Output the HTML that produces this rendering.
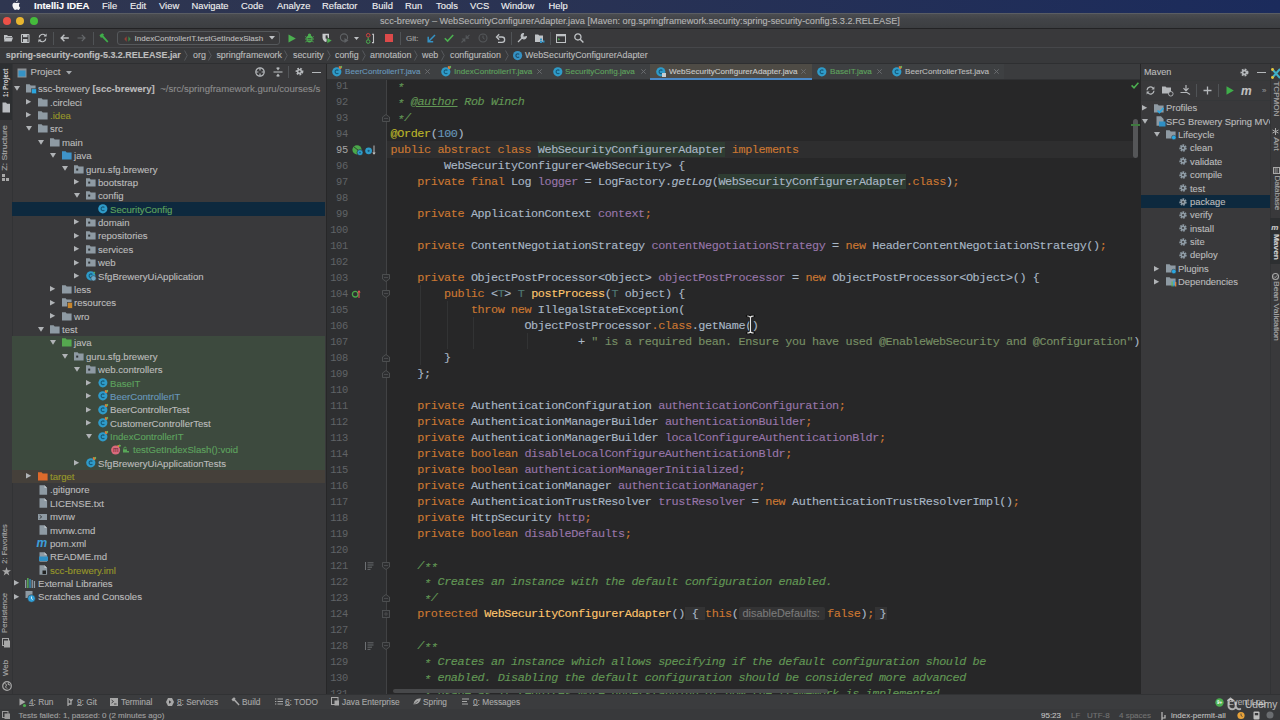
<!DOCTYPE html><html><head><meta charset="utf-8"><style>
*{margin:0;padding:0;box-sizing:border-box}
html,body{width:1280px;height:720px;overflow:hidden;background:#39393b;font-family:"Liberation Sans",sans-serif;}
.abs{position:absolute}
.t{position:absolute;white-space:pre;line-height:1;-webkit-text-stroke:0.12px}
.code{position:absolute;white-space:pre;font-family:"Liberation Mono",monospace;font-size:11.8px;letter-spacing:-0.39px;line-height:16px;height:16px;color:#a9b7c6;-webkit-text-stroke:0.12px;padding-top:0.5px}
.k{color:#cc7832}.f{color:#9876aa}.c{color:#629755;font-style:italic}.s{color:#778f65}.n{color:#6897bb}
.an{color:#bbb529}.m{color:#ffc66d}.tp{color:#507874}.it{font-style:italic}
.hl{background:#2e3c32;padding:0.5px 0}
.ln{position:absolute;font-family:"Liberation Mono",monospace;font-size:10.4px;letter-spacing:-0.35px;line-height:16px;padding-top:0.5px;color:#606366;text-align:right}
svg{position:absolute;overflow:visible}
</style></head><body>
<div class="abs" style="left:0px;top:0px;width:1280px;height:13px;background:linear-gradient(90deg,#2f3650 0%,#2a3353 40%,#1b2b5c 100%);"></div>
<div class="abs" style="left:0px;top:13px;width:1280px;height:1px;background:#5a5d63;"></div>
<svg style="left:11.3px;top:0.3px" width="10" height="11" viewBox="0 0 9 10"><path d="M6.1 0.3c0.1 0.8-0.5 1.7-1.4 1.8-0.1-0.8 0.5-1.7 1.4-1.8zM8.3 7.1c-0.4 0.9-0.9 1.9-1.6 1.9-0.6 0-0.8-0.4-1.5-0.4-0.7 0-0.9 0.4-1.5 0.4-0.7 0-1.4-1.1-1.8-1.9C1 5.3 1 3.5 2.2 2.8c0.4-0.3 0.9-0.4 1.4-0.4 0.5 0 0.9 0.4 1.4 0.4 0.5 0 0.8-0.4 1.5-0.4 0.6 0 1.1 0.3 1.5 0.8-1.2 0.7-1.1 2.8 0.3 3.9z" fill="#f4f4f4"/></svg>
<div class="t" style="left:34.00px;top:1.16px;font-size:9.500px;color:#ffffff;font-weight:bold;font-family:'Liberation Sans';">IntelliJ IDEA</div>
<div class="t" style="left:102.00px;top:1.24px;font-size:9.400px;color:#f0f0f0;font-weight:normal;font-family:'Liberation Sans';">File</div>
<div class="t" style="left:130.00px;top:1.24px;font-size:9.400px;color:#f0f0f0;font-weight:normal;font-family:'Liberation Sans';">Edit</div>
<div class="t" style="left:159.00px;top:1.24px;font-size:9.400px;color:#f0f0f0;font-weight:normal;font-family:'Liberation Sans';">View</div>
<div class="t" style="left:191.50px;top:1.24px;font-size:9.400px;color:#f0f0f0;font-weight:normal;font-family:'Liberation Sans';">Navigate</div>
<div class="t" style="left:241.00px;top:1.24px;font-size:9.400px;color:#f0f0f0;font-weight:normal;font-family:'Liberation Sans';">Code</div>
<div class="t" style="left:277.00px;top:1.24px;font-size:9.400px;color:#f0f0f0;font-weight:normal;font-family:'Liberation Sans';">Analyze</div>
<div class="t" style="left:322.00px;top:1.24px;font-size:9.400px;color:#f0f0f0;font-weight:normal;font-family:'Liberation Sans';">Refactor</div>
<div class="t" style="left:372.00px;top:1.24px;font-size:9.400px;color:#f0f0f0;font-weight:normal;font-family:'Liberation Sans';">Build</div>
<div class="t" style="left:405.00px;top:1.24px;font-size:9.400px;color:#f0f0f0;font-weight:normal;font-family:'Liberation Sans';">Run</div>
<div class="t" style="left:436.00px;top:1.24px;font-size:9.400px;color:#f0f0f0;font-weight:normal;font-family:'Liberation Sans';">Tools</div>
<div class="t" style="left:470.00px;top:1.24px;font-size:9.400px;color:#f0f0f0;font-weight:normal;font-family:'Liberation Sans';">VCS</div>
<div class="t" style="left:501.00px;top:1.24px;font-size:9.400px;color:#f0f0f0;font-weight:normal;font-family:'Liberation Sans';">Window</div>
<div class="t" style="left:548.50px;top:1.24px;font-size:9.400px;color:#f0f0f0;font-weight:normal;font-family:'Liberation Sans';">Help</div>
<div class="abs" style="left:0px;top:14px;width:1280px;height:14px;background:linear-gradient(180deg,#4a4c50 0%,#414347 40%,#3c3e41 100%);"></div>
<div class="abs" style="left:0px;top:27.5px;width:1280px;height:1.5px;background:#232325;"></div>
<div class="abs" style="left:3px;top:17px;width:8px;height:8px;border-radius:50%;background:#ec5147"></div>
<div class="abs" style="left:16.4px;top:17px;width:8px;height:8px;border-radius:50%;background:#e8b630"></div>
<div class="abs" style="left:29.700000000000003px;top:17px;width:8px;height:8px;border-radius:50%;background:#45bb3c"></div>
<div class="t" style="left:380.00px;top:17.23px;font-size:9.175px;color:#b4b4b4;font-weight:normal;font-family:'Liberation Sans';">scc-brewery – WebSecurityConfigurerAdapter.java [Maven: org.springframework.security:spring-security-config:5.3.2.RELEASE]</div>
<div class="abs" style="left:0px;top:29px;width:1280px;height:18px;background:#39393b;"></div>
<div class="abs" style="left:0px;top:47px;width:1280px;height:1px;background:#46474a;"></div>
<svg style="left:4px;top:34px" width="9" height="8" viewBox="0 0 9 8"><path d="M0 1h3l1 1h4v1H2L0 7z" fill="#bfc2c5"/><path d="M1.6 3.5H9L7.6 7.5H0z" fill="#bfc2c5"/></svg>
<svg style="left:21px;top:33.5px" width="8" height="9" viewBox="0 0 8 9"><rect x="0.5" y="0.5" width="7.5" height="8" rx="0.5" fill="none" stroke="#bfc2c5" stroke-width="1.1"/><rect x="2" y="1" width="4.5" height="2.2" fill="#bfc2c5"/><rect x="2" y="5" width="4.5" height="3" fill="#bfc2c5"/></svg>
<svg style="left:38px;top:33px" width="9" height="10" viewBox="0 0 9 10"><path d="M1.2 4.5a3.4 3.4 0 0 1 6-2" fill="none" stroke="#bfc2c5" stroke-width="1.2"/><path d="M7.8 5.5a3.4 3.4 0 0 1-6 2" fill="none" stroke="#bfc2c5" stroke-width="1.2"/><path d="M8.6 0.6v3H5.6z" fill="#bfc2c5"/><path d="M0.4 9.4v-3h3z" fill="#bfc2c5"/></svg>
<div class="abs" style="left:53px;top:32px;width:1px;height:13px;background:#505356;"></div>
<svg style="left:60px;top:34px" width="9" height="8" viewBox="0 0 9 8"><path d="M8.8 4H1.5M4.4 0.8L1.2 4l3.2 3.2" fill="none" stroke="#bfc2c5" stroke-width="1.4"/></svg>
<svg style="left:77px;top:34px" width="9" height="8" viewBox="0 0 9 8"><path d="M0.5 4h7.3M4.8 0.8L8 4 4.8 7.2" fill="none" stroke="#65686b" stroke-width="1.2"/></svg>
<div class="abs" style="left:93px;top:32px;width:1px;height:13px;background:#505356;"></div>
<svg style="left:99px;top:32.5px" width="10" height="11" viewBox="0 0 10 11"><path d="M0.5 2.2L3.2 0.2 5 1.6 4.3 2.4 9.4 8.4 8.2 9.6 3 4.2 2 5z" fill="#3fae4a"/></svg>
<div class="abs" style="left:117px;top:31px;width:163px;height:14px;background:#39393b;border:1px solid #55585b;border-radius:3px"></div>
<svg style="left:123.5px;top:35.5px" width="7" height="6" viewBox="0 0 7 6"><path d="M2.6 0.3L0.3 3 2.6 5.7z" fill="#9a4036"/><path d="M4.4 0.3L6.7 3 4.4 5.7z" fill="#3f8a45"/></svg>
<div class="t" style="left:134.50px;top:34.68px;font-size:8.058px;color:#bcbcbc;font-weight:normal;font-family:'Liberation Sans';">IndexControllerIT.testGetIndexSlash</div>
<svg style="left:269px;top:36px" width="6" height="4" viewBox="0 0 6 4"><path d="M0 0h6L3 3.6z" fill="#bfc2c5"/></svg>
<svg style="left:288px;top:33.5px" width="8" height="9" viewBox="0 0 8 9"><path d="M0.5 0.5L7.8 4.5 0.5 8.5z" fill="#4caf50"/></svg>
<svg style="left:305px;top:33px" width="9" height="10" viewBox="0 0 9 10"><ellipse cx="4.5" cy="5.8" rx="3.1" ry="3.6" fill="#4caf50"/><circle cx="4.5" cy="2" r="1.6" fill="#4caf50"/><path d="M0.3 3.5l1.5 1M8.7 3.5l-1.5 1M0 6h1.5M9 6H7.5M0.4 9l1.5-1M8.6 9l-1.5-1" stroke="#4caf50" stroke-width="0.9"/><path d="M2.6 5.5h3.8M2.6 7.2h3.8" stroke="#39393b" stroke-width="0.7"/></svg>
<svg style="left:322px;top:33px" width="11" height="11" viewBox="0 0 11 11"><path d="M0.5 0.8h6.5v3.7c0 2.4-1.7 3.9-3.25 4.6C2.2 8.4 0.5 6.9 0.5 4.5z" fill="#c9cbcd"/><path d="M3.6 2.3h2v3.3H3.6z" fill="#39393b"/><path d="M5 4.5l5.2 3.1L5 10.7z" fill="#4caf50" stroke="#39393b" stroke-width="0.7"/></svg>
<svg style="left:340px;top:33px" width="9" height="10" viewBox="0 0 9 10"><circle cx="4" cy="4.5" r="3.6" fill="none" stroke="#5f6265" stroke-width="1.1"/><path d="M4.5 5l4 2.5-4 2.5z" fill="#5f6265"/></svg>
<svg style="left:354px;top:36.5px" width="5" height="3" viewBox="0 0 5 3"><path d="M0 0h5L2.5 3z" fill="#bfc2c5"/></svg>
<svg style="left:366px;top:32.5px" width="9" height="11" viewBox="0 0 9 11"><circle cx="2.2" cy="2.3" r="1.8" fill="none" stroke="#d2433e" stroke-width="1"/><circle cx="2.2" cy="8.6" r="1.8" fill="none" stroke="#4caf50" stroke-width="1"/><path d="M2.2 4.3v2.4" stroke="#4caf50" stroke-width="1"/><path d="M6 1.2h1.5v8.4H6" fill="none" stroke="#c2c4c6" stroke-width="1.1"/></svg>
<div class="abs" style="left:385px;top:34px;width:8px;height:8px;background:#dc4a4a;"></div>
<div class="abs" style="left:400px;top:32px;width:1px;height:13px;background:#505356;"></div>
<div class="t" style="left:406.00px;top:34.70px;font-size:8.035px;color:#a6a6a6;font-weight:normal;font-family:'Liberation Sans';">Git:</div>
<svg style="left:427px;top:33.5px" width="9" height="9" viewBox="0 0 9 9"><path d="M8 1L1.8 7.2M1.2 2.8v5h5" fill="none" stroke="#3592c4" stroke-width="1.5"/></svg>
<svg style="left:444px;top:34px" width="10" height="8" viewBox="0 0 10 8"><path d="M0.8 4.2L3.6 7 9.2 1" fill="none" stroke="#4caf50" stroke-width="1.6"/></svg>
<svg style="left:461px;top:33.5px" width="9" height="9" viewBox="0 0 9 9"><path d="M8.5 0.8L5.5 3.8M5.2 1.2v2.9h2.9M0.5 8.5l3-3M3.8 7.8V5h-2.9" fill="none" stroke="#55585b" stroke-width="1.1"/></svg>
<svg style="left:478px;top:33px" width="10" height="10" viewBox="0 0 10 10"><circle cx="5" cy="5" r="4" fill="none" stroke="#55585b" stroke-width="1.1"/><path d="M5 2.6V5l1.6 1" fill="none" stroke="#55585b" stroke-width="1"/></svg>
<svg style="left:496px;top:33.5px" width="9" height="9" viewBox="0 0 9 9"><path d="M2.5 3h3.5a2.6 2.6 0 0 1 0 5.3H2" fill="none" stroke="#bfc2c5" stroke-width="1.3"/><path d="M3.2 0.3L0.5 3 3.2 5.7" fill="none" stroke="#bfc2c5" stroke-width="1.3"/></svg>
<div class="abs" style="left:511px;top:32px;width:1px;height:13px;background:#505356;"></div>
<svg style="left:517px;top:33px" width="10" height="10" viewBox="0 0 10 10"><path d="M1 9L5 5M6.5 0.6a2.6 2.6 0 1 0 2.9 2.9L7.8 4.2 5.8 4.2 5.8 2.2 6.5 0.6z" fill="#bfc2c5" stroke="#bfc2c5" stroke-width="1.2" stroke-linejoin="round"/></svg>
<svg style="left:535px;top:33.5px" width="10" height="9" viewBox="0 0 10 9"><path d="M0 0.5h3.2l1 1H8v6.5H0z" fill="#bfc2c5"/><rect x="5" y="4.5" width="2" height="2" fill="#3592c4"/><rect x="7.5" y="6.5" width="2" height="2" fill="#3592c4"/><rect x="5" y="7" width="2" height="2" fill="#3592c4"/></svg>
<div class="abs" style="left:550px;top:32px;width:1px;height:13px;background:#505356;"></div>
<svg style="left:556px;top:33.5px" width="10" height="9" viewBox="0 0 10 9"><rect x="0.5" y="0.5" width="9" height="8" fill="none" stroke="#bfc2c5" stroke-width="1"/><rect x="0.5" y="0.5" width="9" height="1.8" fill="#bfc2c5"/><path d="M2.2 4l2 1.3-2 1.3z" fill="#4caf50"/></svg>
<svg style="left:574px;top:33px" width="10" height="10" viewBox="0 0 10 10"><circle cx="3.9" cy="3.9" r="3.1" fill="none" stroke="#bfc2c5" stroke-width="1.3"/><path d="M6.2 6.2l3.2 3.2" stroke="#bfc2c5" stroke-width="1.4"/></svg>
<div class="abs" style="left:0px;top:48px;width:1280px;height:15px;background:#38393b;"></div>
<div class="abs" style="left:0px;top:63px;width:1280px;height:1px;background:#2e2f31;"></div>
<div class="t" style="left:5.80px;top:50.94px;font-size:8.932px;color:#bdbdbd;font-weight:bold;font-family:'Liberation Sans';">spring-security-config-5.3.2.RELEASE.jar</div>
<div class="t" style="left:193.00px;top:50.97px;font-size:8.900px;color:#bbbbbb;font-weight:normal;font-family:'Liberation Sans';">org</div>
<div class="t" style="left:216.40px;top:50.97px;font-size:8.900px;color:#bbbbbb;font-weight:normal;font-family:'Liberation Sans';">springframework</div>
<div class="t" style="left:293.00px;top:50.97px;font-size:8.900px;color:#bbbbbb;font-weight:normal;font-family:'Liberation Sans';">security</div>
<div class="t" style="left:335.00px;top:50.97px;font-size:8.900px;color:#bbbbbb;font-weight:normal;font-family:'Liberation Sans';">config</div>
<div class="t" style="left:370.00px;top:50.97px;font-size:8.900px;color:#bbbbbb;font-weight:normal;font-family:'Liberation Sans';">annotation</div>
<div class="t" style="left:422.00px;top:50.97px;font-size:8.900px;color:#bbbbbb;font-weight:normal;font-family:'Liberation Sans';">web</div>
<div class="t" style="left:450.00px;top:50.97px;font-size:8.900px;color:#bbbbbb;font-weight:normal;font-family:'Liberation Sans';">configuration</div>
<div class="t" style="left:525.00px;top:50.97px;font-size:8.900px;color:#bbbbbb;font-weight:normal;font-family:'Liberation Sans';">WebSecurityConfigurerAdapter</div>
<svg style="left:184px;top:50px" width="4" height="11" viewBox="0 0 4 11"><path d="M0.5 0.5L3.2 5.5 0.5 10.5" fill="none" stroke="#5d6064" stroke-width="0.8"/></svg>
<svg style="left:207.5px;top:50px" width="4" height="11" viewBox="0 0 4 11"><path d="M0.5 0.5L3.2 5.5 0.5 10.5" fill="none" stroke="#5d6064" stroke-width="0.8"/></svg>
<svg style="left:284px;top:50px" width="4" height="11" viewBox="0 0 4 11"><path d="M0.5 0.5L3.2 5.5 0.5 10.5" fill="none" stroke="#5d6064" stroke-width="0.8"/></svg>
<svg style="left:326.5px;top:50px" width="4" height="11" viewBox="0 0 4 11"><path d="M0.5 0.5L3.2 5.5 0.5 10.5" fill="none" stroke="#5d6064" stroke-width="0.8"/></svg>
<svg style="left:362px;top:50px" width="4" height="11" viewBox="0 0 4 11"><path d="M0.5 0.5L3.2 5.5 0.5 10.5" fill="none" stroke="#5d6064" stroke-width="0.8"/></svg>
<svg style="left:414px;top:50px" width="4" height="11" viewBox="0 0 4 11"><path d="M0.5 0.5L3.2 5.5 0.5 10.5" fill="none" stroke="#5d6064" stroke-width="0.8"/></svg>
<svg style="left:441px;top:50px" width="4" height="11" viewBox="0 0 4 11"><path d="M0.5 0.5L3.2 5.5 0.5 10.5" fill="none" stroke="#5d6064" stroke-width="0.8"/></svg>
<svg style="left:504.5px;top:50px" width="4" height="11" viewBox="0 0 4 11"><path d="M0.5 0.5L3.2 5.5 0.5 10.5" fill="none" stroke="#5d6064" stroke-width="0.8"/></svg>
<svg style="left:512.5px;top:51px" width="9.2" height="9.2" viewBox="0 0 9.2 9.2"><circle cx="4.6" cy="4.6" r="4.6" fill="#3592c4"/><path d="M6.199999999999999 3.3a1.9 1.9 0 1 0 0 2.6" fill="none" stroke="#1d4f6e" stroke-width="1.1"/></svg>
<!--END-->
<div class="abs" style="left:0px;top:64px;width:12px;height:630px;background:#39393b;"></div>
<div class="abs" style="left:12px;top:64px;width:1px;height:630px;background:#323335;"></div>
<div class="abs" style="left:0px;top:64px;width:12px;height:56px;background:#2d2f31;"></div>
<div class="t" style="left:-16.57px;top:78.86px;width:45.55px;height:7.8px;font-size:7.800px;color:#d0d0d0;font-weight:bold;text-align:center;transform:rotate(-90deg) scaleX(0.796)">1: Project</div>
<svg style="left:2px;top:101.5px" width="8.5" height="10.5" viewBox="0 0 8.5 10.5"><path d="M0.5 0.5h3.5l1 1.2h3v8.8H0.5z" fill="#b8bcc0"/></svg>
<div class="t" style="left:-19.87px;top:143.56px;width:50.74px;height:7.8px;font-size:7.800px;color:#a8a8a8;font-weight:normal;text-align:center;transform:rotate(-90deg) scaleX(1.122)">Z: Structure</div>
<svg style="left:2px;top:173.5px" width="8" height="7.5" viewBox="0 0 8 7.5"><rect x="0" y="4" width="3" height="3" fill="#a8a8a8"/><rect x="4" y="4" width="3" height="3" fill="#a8a8a8"/><rect x="0" y="0" width="3" height="3" fill="#a8a8a8"/></svg>
<div class="t" style="left:-19.87px;top:539.96px;width:50.75px;height:7.8px;font-size:7.800px;color:#a8a8a8;font-weight:normal;text-align:center;transform:rotate(-90deg) scaleX(0.969)">2: Favorites</div>
<svg style="left:1.5px;top:566.5px" width="9" height="9" viewBox="0 0 9 9"><path d="M4.5 0l1.1 3.2H9L6.3 5.2l1 3.3-2.8-2-2.8 2 1-3.3L0 3.2h3.4z" fill="#a8a8a8"/></svg>
<div class="t" style="left:-19.88px;top:608.71px;width:50.75px;height:7.8px;font-size:7.800px;color:#a8a8a8;font-weight:normal;text-align:center;transform:rotate(-90deg) scaleX(0.982)">Persistence</div>
<svg style="left:2px;top:637.5px" width="8" height="10" viewBox="0 0 8 10"><rect x="0.5" y="0.5" width="6" height="7" fill="none" stroke="#a8a8a8" stroke-width="1"/><rect x="2" y="2.5" width="6" height="7" fill="#a8a8a8"/></svg>
<div class="t" style="left:-7.45px;top:663.71px;width:25.90px;height:7.8px;font-size:7.800px;color:#a8a8a8;font-weight:normal;text-align:center;transform:rotate(-90deg) scaleX(1.006)">Web</div>
<svg style="left:1.5px;top:680.5px" width="10" height="10" viewBox="0 0 10 10"><circle cx="5" cy="5" r="4.3" fill="none" stroke="#a8a8a8" stroke-width="1.2"/><path d="M2.5 2.2l2.2 1.6-1.2 2.2 1.6 1.6M6.5 1.3l-.5 1.9 2.2 1" fill="none" stroke="#a8a8a8" stroke-width="1"/></svg>
<div class="abs" style="left:13px;top:64px;width:313px;height:630px;background:#39393b;"></div>
<svg style="left:17px;top:67.5px" width="10" height="10" viewBox="0 0 10 10"><rect x="0.5" y="0.5" width="9" height="9" fill="#8e9398"/><rect x="1.5" y="2.5" width="7" height="6" fill="#3592c4"/></svg>
<div class="t" style="left:30.50px;top:67.37px;font-size:9.600px;color:#bbbbbb;font-weight:normal;font-family:'Liberation Sans';">Project</div>
<svg style="left:66px;top:71px" width="6" height="4" viewBox="0 0 6 4"><path d="M0 0h6L3 3.5z" fill="#a5a9ad"/></svg>
<svg style="left:255px;top:67px" width="10" height="10" viewBox="0 0 10 10"><circle cx="5" cy="5" r="4.2" fill="none" stroke="#b5b8bb" stroke-width="1.2"/><path d="M5 0.8v2.6M5 6.6v2.6M0.8 5h2.6M6.6 5h2.6" stroke="#b5b8bb" stroke-width="1.2"/></svg>
<svg style="left:273px;top:67px" width="10" height="10" viewBox="0 0 10 10"><path d="M0.5 5h9" stroke="#b5b8bb" stroke-width="1.1"/><path d="M3 0.8h4L5 3.4z M3 9.2h4L5 6.6z" fill="#b5b8bb"/><path d="M5 0v1M5 9v1" stroke="#b5b8bb" stroke-width="1"/></svg>
<div class="abs" style="left:288px;top:66px;width:1px;height:12px;background:#505356;"></div>
<svg style="left:295px;top:67px" width="9" height="9" viewBox="0 0 9 9"><circle cx="4.5" cy="4.5" r="2.8" fill="none" stroke="#b5b8bb" stroke-width="2.2" stroke-dasharray="1.6 1.1"/><circle cx="4.5" cy="4.5" r="2.6" fill="#b5b8bb"/><circle cx="4.5" cy="4.5" r="1.1" fill="#39393b"/></svg>
<div class="abs" style="left:312px;top:71.5px;width:9px;height:1.2px;background:#b5b8bb;"></div>
<div class="abs" style="left:12px;top:202.13px;width:313px;height:13.4px;background:#0d293e;"></div>
<div class="abs" style="left:12px;top:335.83px;width:313px;height:133.7px;background:#3d4a3e;"></div>
<div class="abs" style="left:12px;top:469.53px;width:313px;height:13.4px;background:#45403a;"></div>
<svg style="left:13.8px;top:86.2px" width="6" height="5" viewBox="0 0 6 5"><path d="M0 0H6L3 4.8z" fill="#b0b3b6"/></svg>
<svg style="left:25.5px;top:84.3px" width="10" height="8.5" viewBox="0 0 10 8.5"><path d="M0 0.3h3.6l1.1 1.3H9.6v6.8H0z" fill="#8e9aa3"/><rect x="5.5" y="4.8" width="5" height="5" fill="#2aa6e0" stroke="#39393b" stroke-width="0.6"/></svg>
<div class="t" style="left:38.00px;top:84.37px;font-size:9.600px;color:#bbbbbb;font-weight:normal;font-family:'Liberation Sans';">ssc-brewery </div>
<div class="t" style="left:92.41px;top:84.37px;font-size:9.600px;color:#bbbbbb;font-weight:bold;font-family:'Liberation Sans';">[scc-brewery]</div>
<div class="t" style="left:154.84px;top:84.37px;font-size:9.600px;color:#8b8b8b;font-weight:normal;font-family:'Liberation Sans';">  ~/src/springframework.guru/courses/s</div>
<svg style="left:26.1px;top:99.07000000000001px" width="6" height="6" viewBox="0 0 6 6"><path d="M0 0L5.2 2.8 0 5.6z" fill="#b0b3b6"/></svg>
<svg style="left:37.5px;top:97.67px" width="10" height="8.5" viewBox="0 0 10 8.5"><path d="M0 0.3h3.6l1.1 1.3H9.6v6.8H0z" fill="#8e9aa3"/></svg>
<div class="t" style="left:50.00px;top:97.74px;font-size:9.600px;color:#bbbbbb;font-weight:normal;font-family:'Liberation Sans';">.circleci</div>
<svg style="left:26.1px;top:112.44px" width="6" height="6" viewBox="0 0 6 6"><path d="M0 0L5.2 2.8 0 5.6z" fill="#b0b3b6"/></svg>
<svg style="left:37.5px;top:111.03999999999999px" width="10" height="8.5" viewBox="0 0 10 8.5"><path d="M0 0.3h3.6l1.1 1.3H9.6v6.8H0z" fill="#8e9aa3"/></svg>
<div class="t" style="left:50.00px;top:111.11px;font-size:9.600px;color:#98982a;font-weight:normal;font-family:'Liberation Sans';">.idea</div>
<svg style="left:25.8px;top:126.31000000000002px" width="6" height="5" viewBox="0 0 6 5"><path d="M0 0H6L3 4.8z" fill="#b0b3b6"/></svg>
<svg style="left:37.5px;top:124.41000000000001px" width="10" height="8.5" viewBox="0 0 10 8.5"><path d="M0 0.3h3.6l1.1 1.3H9.6v6.8H0z" fill="#8e9aa3"/></svg>
<div class="t" style="left:50.00px;top:124.48px;font-size:9.600px;color:#bbbbbb;font-weight:normal;font-family:'Liberation Sans';">src</div>
<svg style="left:37.8px;top:139.67999999999998px" width="6" height="5" viewBox="0 0 6 5"><path d="M0 0H6L3 4.8z" fill="#b0b3b6"/></svg>
<svg style="left:49.5px;top:137.78px" width="10" height="8.5" viewBox="0 0 10 8.5"><path d="M0 0.3h3.6l1.1 1.3H9.6v6.8H0z" fill="#8e9aa3"/></svg>
<div class="t" style="left:62.00px;top:137.85px;font-size:9.600px;color:#bbbbbb;font-weight:normal;font-family:'Liberation Sans';">main</div>
<svg style="left:49.8px;top:153.04999999999998px" width="6" height="5" viewBox="0 0 6 5"><path d="M0 0H6L3 4.8z" fill="#b0b3b6"/></svg>
<svg style="left:61.5px;top:151.15px" width="10" height="8.5" viewBox="0 0 10 8.5"><path d="M0 0.3h3.6l1.1 1.3H9.6v6.8H0z" fill="#3f93c8"/></svg>
<div class="t" style="left:74.00px;top:151.22px;font-size:9.600px;color:#bbbbbb;font-weight:normal;font-family:'Liberation Sans';">java</div>
<svg style="left:61.8px;top:166.42px" width="6" height="5" viewBox="0 0 6 5"><path d="M0 0H6L3 4.8z" fill="#b0b3b6"/></svg>
<svg style="left:73.5px;top:164.52px" width="10" height="8.5" viewBox="0 0 10 8.5"><path d="M0 0.3h3.6l1.1 1.3H9.6v6.8H0z" fill="#8e9aa3"/><rect x="2.2" y="3.6" width="2" height="2" fill="#2f3336"/></svg>
<div class="t" style="left:86.00px;top:164.59px;font-size:9.600px;color:#bbbbbb;font-weight:normal;font-family:'Liberation Sans';">guru.sfg.brewery</div>
<svg style="left:74.1px;top:179.28999999999996px" width="6" height="6" viewBox="0 0 6 6"><path d="M0 0L5.2 2.8 0 5.6z" fill="#b0b3b6"/></svg>
<svg style="left:85.5px;top:177.89px" width="10" height="8.5" viewBox="0 0 10 8.5"><path d="M0 0.3h3.6l1.1 1.3H9.6v6.8H0z" fill="#8e9aa3"/><rect x="2.2" y="3.6" width="2" height="2" fill="#2f3336"/></svg>
<div class="t" style="left:98.00px;top:177.96px;font-size:9.600px;color:#bbbbbb;font-weight:normal;font-family:'Liberation Sans';">bootstrap</div>
<svg style="left:73.8px;top:193.15999999999997px" width="6" height="5" viewBox="0 0 6 5"><path d="M0 0H6L3 4.8z" fill="#b0b3b6"/></svg>
<svg style="left:85.5px;top:191.26px" width="10" height="8.5" viewBox="0 0 10 8.5"><path d="M0 0.3h3.6l1.1 1.3H9.6v6.8H0z" fill="#8e9aa3"/><rect x="2.2" y="3.6" width="2" height="2" fill="#2f3336"/></svg>
<div class="t" style="left:98.00px;top:191.33px;font-size:9.600px;color:#bbbbbb;font-weight:normal;font-family:'Liberation Sans';">config</div>
<svg style="left:97.5px;top:204.23px" width="10" height="10" viewBox="0 0 10 10"><circle cx="4.8" cy="4.8" r="4.6" fill="#2f9bc9"/><path d="M6.4 3.5a1.9 1.9 0 1 0 0 2.6" fill="none" stroke="#165a7a" stroke-width="1.1"/></svg>
<div class="t" style="left:110.00px;top:204.70px;font-size:9.600px;color:#5ea35e;font-weight:normal;font-family:'Liberation Sans';">SecurityConfig</div>
<svg style="left:74.1px;top:219.39999999999998px" width="6" height="6" viewBox="0 0 6 6"><path d="M0 0L5.2 2.8 0 5.6z" fill="#b0b3b6"/></svg>
<svg style="left:85.5px;top:218.0px" width="10" height="8.5" viewBox="0 0 10 8.5"><path d="M0 0.3h3.6l1.1 1.3H9.6v6.8H0z" fill="#8e9aa3"/><rect x="2.2" y="3.6" width="2" height="2" fill="#2f3336"/></svg>
<div class="t" style="left:98.00px;top:218.07px;font-size:9.600px;color:#bbbbbb;font-weight:normal;font-family:'Liberation Sans';">domain</div>
<svg style="left:74.1px;top:232.76999999999998px" width="6" height="6" viewBox="0 0 6 6"><path d="M0 0L5.2 2.8 0 5.6z" fill="#b0b3b6"/></svg>
<svg style="left:85.5px;top:231.37px" width="10" height="8.5" viewBox="0 0 10 8.5"><path d="M0 0.3h3.6l1.1 1.3H9.6v6.8H0z" fill="#8e9aa3"/><rect x="2.2" y="3.6" width="2" height="2" fill="#2f3336"/></svg>
<div class="t" style="left:98.00px;top:231.44px;font-size:9.600px;color:#bbbbbb;font-weight:normal;font-family:'Liberation Sans';">repositories</div>
<svg style="left:74.1px;top:246.14px" width="6" height="6" viewBox="0 0 6 6"><path d="M0 0L5.2 2.8 0 5.6z" fill="#b0b3b6"/></svg>
<svg style="left:85.5px;top:244.74px" width="10" height="8.5" viewBox="0 0 10 8.5"><path d="M0 0.3h3.6l1.1 1.3H9.6v6.8H0z" fill="#8e9aa3"/><rect x="2.2" y="3.6" width="2" height="2" fill="#2f3336"/></svg>
<div class="t" style="left:98.00px;top:244.81px;font-size:9.600px;color:#bbbbbb;font-weight:normal;font-family:'Liberation Sans';">services</div>
<svg style="left:74.1px;top:259.51px" width="6" height="6" viewBox="0 0 6 6"><path d="M0 0L5.2 2.8 0 5.6z" fill="#b0b3b6"/></svg>
<svg style="left:85.5px;top:258.11px" width="10" height="8.5" viewBox="0 0 10 8.5"><path d="M0 0.3h3.6l1.1 1.3H9.6v6.8H0z" fill="#8e9aa3"/><rect x="2.2" y="3.6" width="2" height="2" fill="#2f3336"/></svg>
<div class="t" style="left:98.00px;top:258.18px;font-size:9.600px;color:#bbbbbb;font-weight:normal;font-family:'Liberation Sans';">web</div>
<svg style="left:74.1px;top:272.87999999999994px" width="6" height="6" viewBox="0 0 6 6"><path d="M0 0L5.2 2.8 0 5.6z" fill="#b0b3b6"/></svg>
<svg style="left:85.5px;top:271.0799999999999px" width="10" height="10" viewBox="0 0 10 10"><circle cx="4.8" cy="4.8" r="4.6" fill="#2f9bc9"/><path d="M6.4 3.5a1.9 1.9 0 1 0 0 2.6" fill="none" stroke="#165a7a" stroke-width="1.1"/><circle cx="7.5" cy="7.3" r="2.6" fill="#6aa8c8" stroke="#39393b" stroke-width="0.5"/><path d="M7.8 0.2l1.5 1.5-1.5 1.2z" fill="#5cb85c"/></svg>
<div class="t" style="left:98.00px;top:271.55px;font-size:9.600px;color:#bbbbbb;font-weight:normal;font-family:'Liberation Sans';">SfgBreweryUiApplication</div>
<svg style="left:50.099999999999994px;top:286.24999999999994px" width="6" height="6" viewBox="0 0 6 6"><path d="M0 0L5.2 2.8 0 5.6z" fill="#b0b3b6"/></svg>
<svg style="left:61.5px;top:284.84999999999997px" width="10" height="8.5" viewBox="0 0 10 8.5"><path d="M0 0.3h3.6l1.1 1.3H9.6v6.8H0z" fill="#8e9aa3"/></svg>
<div class="t" style="left:74.00px;top:284.92px;font-size:9.600px;color:#bbbbbb;font-weight:normal;font-family:'Liberation Sans';">less</div>
<svg style="left:50.099999999999994px;top:299.61999999999995px" width="6" height="6" viewBox="0 0 6 6"><path d="M0 0L5.2 2.8 0 5.6z" fill="#b0b3b6"/></svg>
<svg style="left:61.5px;top:298.21999999999997px" width="10" height="8.5" viewBox="0 0 10 8.5"><path d="M0 0.3h3.6l1.1 1.3H9.6v6.8H0z" fill="#8e9aa3"/><rect x="5.5" y="4.3" width="5" height="6" fill="#c8862e" stroke="#39393b" stroke-width="0.6"/></svg>
<div class="t" style="left:74.00px;top:298.29px;font-size:9.600px;color:#bbbbbb;font-weight:normal;font-family:'Liberation Sans';">resources</div>
<svg style="left:50.099999999999994px;top:312.98999999999995px" width="6" height="6" viewBox="0 0 6 6"><path d="M0 0L5.2 2.8 0 5.6z" fill="#b0b3b6"/></svg>
<svg style="left:61.5px;top:311.59px" width="10" height="8.5" viewBox="0 0 10 8.5"><path d="M0 0.3h3.6l1.1 1.3H9.6v6.8H0z" fill="#8e9aa3"/></svg>
<div class="t" style="left:74.00px;top:311.66px;font-size:9.600px;color:#bbbbbb;font-weight:normal;font-family:'Liberation Sans';">wro</div>
<svg style="left:37.8px;top:326.85999999999996px" width="6" height="5" viewBox="0 0 6 5"><path d="M0 0H6L3 4.8z" fill="#b0b3b6"/></svg>
<svg style="left:49.5px;top:324.96px" width="10" height="8.5" viewBox="0 0 10 8.5"><path d="M0 0.3h3.6l1.1 1.3H9.6v6.8H0z" fill="#8e9aa3"/></svg>
<div class="t" style="left:62.00px;top:325.03px;font-size:9.600px;color:#bbbbbb;font-weight:normal;font-family:'Liberation Sans';">test</div>
<svg style="left:49.8px;top:340.22999999999996px" width="6" height="5" viewBox="0 0 6 5"><path d="M0 0H6L3 4.8z" fill="#b0b3b6"/></svg>
<svg style="left:61.5px;top:338.33px" width="10" height="8.5" viewBox="0 0 10 8.5"><path d="M0 0.3h3.6l1.1 1.3H9.6v6.8H0z" fill="#55a84f"/></svg>
<div class="t" style="left:74.00px;top:338.40px;font-size:9.600px;color:#bbbbbb;font-weight:normal;font-family:'Liberation Sans';">java</div>
<svg style="left:61.8px;top:353.59999999999997px" width="6" height="5" viewBox="0 0 6 5"><path d="M0 0H6L3 4.8z" fill="#b0b3b6"/></svg>
<svg style="left:73.5px;top:351.7px" width="10" height="8.5" viewBox="0 0 10 8.5"><path d="M0 0.3h3.6l1.1 1.3H9.6v6.8H0z" fill="#8e9aa3"/><rect x="2.2" y="3.6" width="2" height="2" fill="#2f3336"/></svg>
<div class="t" style="left:86.00px;top:351.77px;font-size:9.600px;color:#bbbbbb;font-weight:normal;font-family:'Liberation Sans';">guru.sfg.brewery</div>
<svg style="left:73.8px;top:366.96999999999997px" width="6" height="5" viewBox="0 0 6 5"><path d="M0 0H6L3 4.8z" fill="#b0b3b6"/></svg>
<svg style="left:85.5px;top:365.07px" width="10" height="8.5" viewBox="0 0 10 8.5"><path d="M0 0.3h3.6l1.1 1.3H9.6v6.8H0z" fill="#8e9aa3"/><rect x="2.2" y="3.6" width="2" height="2" fill="#2f3336"/></svg>
<div class="t" style="left:98.00px;top:365.14px;font-size:9.600px;color:#bbbbbb;font-weight:normal;font-family:'Liberation Sans';">web.controllers</div>
<svg style="left:86.1px;top:379.84px" width="6" height="6" viewBox="0 0 6 6"><path d="M0 0L5.2 2.8 0 5.6z" fill="#b0b3b6"/></svg>
<svg style="left:97.5px;top:378.03999999999996px" width="10" height="10" viewBox="0 0 10 10"><circle cx="4.8" cy="4.8" r="4.6" fill="#2f9bc9"/><path d="M1 1.5a4.6 4.6 0 0 0 0 6.6" fill="none" stroke="#3d4a3e" stroke-width="1.2"/><path d="M6.4 3.5a1.9 1.9 0 1 0 0 2.6" fill="none" stroke="#165a7a" stroke-width="1.1"/></svg>
<div class="t" style="left:110.00px;top:378.51px;font-size:9.600px;color:#5ea35e;font-weight:normal;font-family:'Liberation Sans';">BaseIT</div>
<svg style="left:86.1px;top:393.21px" width="6" height="6" viewBox="0 0 6 6"><path d="M0 0L5.2 2.8 0 5.6z" fill="#b0b3b6"/></svg>
<svg style="left:97.5px;top:391.40999999999997px" width="10" height="10" viewBox="0 0 10 10"><circle cx="4.8" cy="4.8" r="4.6" fill="#2f9bc9"/><path d="M6.4 3.5a1.9 1.9 0 1 0 0 2.6" fill="none" stroke="#165a7a" stroke-width="1.1"/><path d="M7 -0.5l1 1.2 1.8-1.4" fill="none" stroke="#e8853a" stroke-width="1.2"/><circle cx="8.3" cy="0.8" r="1.3" fill="#e37a38"/><circle cx="9.3" cy="0" r="0.9" fill="#5cb85c"/></svg>
<div class="t" style="left:110.00px;top:391.88px;font-size:9.600px;color:#6897bb;font-weight:normal;font-family:'Liberation Sans';">BeerControllerIT</div>
<svg style="left:86.1px;top:406.58px" width="6" height="6" viewBox="0 0 6 6"><path d="M0 0L5.2 2.8 0 5.6z" fill="#b0b3b6"/></svg>
<svg style="left:97.5px;top:404.78px" width="10" height="10" viewBox="0 0 10 10"><circle cx="4.8" cy="4.8" r="4.6" fill="#2f9bc9"/><path d="M6.4 3.5a1.9 1.9 0 1 0 0 2.6" fill="none" stroke="#165a7a" stroke-width="1.1"/><path d="M7 -0.5l1 1.2 1.8-1.4" fill="none" stroke="#e8853a" stroke-width="1.2"/><circle cx="8.3" cy="0.8" r="1.3" fill="#e37a38"/><circle cx="9.3" cy="0" r="0.9" fill="#5cb85c"/></svg>
<div class="t" style="left:110.00px;top:405.25px;font-size:9.600px;color:#bbbbbb;font-weight:normal;font-family:'Liberation Sans';">BeerControllerTest</div>
<svg style="left:86.1px;top:419.95px" width="6" height="6" viewBox="0 0 6 6"><path d="M0 0L5.2 2.8 0 5.6z" fill="#b0b3b6"/></svg>
<svg style="left:97.5px;top:418.15px" width="10" height="10" viewBox="0 0 10 10"><circle cx="4.8" cy="4.8" r="4.6" fill="#2f9bc9"/><path d="M6.4 3.5a1.9 1.9 0 1 0 0 2.6" fill="none" stroke="#165a7a" stroke-width="1.1"/><path d="M7 -0.5l1 1.2 1.8-1.4" fill="none" stroke="#e8853a" stroke-width="1.2"/><circle cx="8.3" cy="0.8" r="1.3" fill="#e37a38"/><circle cx="9.3" cy="0" r="0.9" fill="#5cb85c"/></svg>
<div class="t" style="left:110.00px;top:418.62px;font-size:9.600px;color:#bbbbbb;font-weight:normal;font-family:'Liberation Sans';">CustomerControllerTest</div>
<svg style="left:85.8px;top:433.82px" width="6" height="5" viewBox="0 0 6 5"><path d="M0 0H6L3 4.8z" fill="#b0b3b6"/></svg>
<svg style="left:97.5px;top:431.52px" width="10" height="10" viewBox="0 0 10 10"><circle cx="4.8" cy="4.8" r="4.6" fill="#2f9bc9"/><path d="M6.4 3.5a1.9 1.9 0 1 0 0 2.6" fill="none" stroke="#165a7a" stroke-width="1.1"/><path d="M7 -0.5l1 1.2 1.8-1.4" fill="none" stroke="#e8853a" stroke-width="1.2"/><circle cx="8.3" cy="0.8" r="1.3" fill="#e37a38"/><circle cx="9.3" cy="0" r="0.9" fill="#5cb85c"/></svg>
<div class="t" style="left:110.00px;top:431.99px;font-size:9.600px;color:#5ea35e;font-weight:normal;font-family:'Liberation Sans';">IndexControllerIT</div>
<svg style="left:110.5px;top:444.88999999999993px" width="10" height="10" viewBox="0 0 10 10"><circle cx="4.6" cy="5" r="4.5" fill="#d96a7c"/><text x="4.6" y="7.3" font-size="6.5" text-anchor="middle" fill="#5a2030" font-family="Liberation Sans">m</text><path d="M6.5 0.5l1 1 1.5-1.5" stroke="#e8853a" stroke-width="1.2" fill="none"/><circle cx="8.8" cy="0.8" r="1" fill="#5cb85c"/></svg>
<svg style="left:122.5px;top:446.98999999999995px" width="6" height="6" viewBox="0 0 6 6"><rect x="0" y="2.3" width="4" height="3.2" fill="#58a858"/><path d="M0.9 2.5V1.3a1.2 1.2 0 0 1 2.4 0" fill="none" stroke="#58a858" stroke-width="0.9"/><rect x="4" y="4" width="2" height="1.5" fill="#58a858"/></svg>
<div class="t" style="left:133.00px;top:445.36px;font-size:9.600px;color:#5ea35e;font-weight:normal;font-family:'Liberation Sans';">testGetIndexSlash():void</div>
<svg style="left:74.1px;top:460.05999999999995px" width="6" height="6" viewBox="0 0 6 6"><path d="M0 0L5.2 2.8 0 5.6z" fill="#b0b3b6"/></svg>
<svg style="left:85.5px;top:458.25999999999993px" width="10" height="10" viewBox="0 0 10 10"><circle cx="4.8" cy="4.8" r="4.6" fill="#2f9bc9"/><path d="M6.4 3.5a1.9 1.9 0 1 0 0 2.6" fill="none" stroke="#165a7a" stroke-width="1.1"/><path d="M7 -0.5l1 1.2 1.8-1.4" fill="none" stroke="#e8853a" stroke-width="1.2"/><circle cx="8.3" cy="0.8" r="1.3" fill="#e37a38"/><circle cx="9.3" cy="0" r="0.9" fill="#5cb85c"/></svg>
<div class="t" style="left:98.00px;top:458.73px;font-size:9.600px;color:#bbbbbb;font-weight:normal;font-family:'Liberation Sans';">SfgBreweryUiApplicationTests</div>
<svg style="left:26.1px;top:473.42999999999995px" width="6" height="6" viewBox="0 0 6 6"><path d="M0 0L5.2 2.8 0 5.6z" fill="#b0b3b6"/></svg>
<svg style="left:37.5px;top:472.03px" width="10" height="8.5" viewBox="0 0 10 8.5"><path d="M0 0.3h3.6l1.1 1.3H9.6v6.8H0z" fill="#e06a2c"/></svg>
<div class="t" style="left:50.00px;top:472.10px;font-size:9.600px;color:#98982a;font-weight:normal;font-family:'Liberation Sans';">target</div>
<svg style="left:38.5px;top:484.79999999999995px" width="9" height="10" viewBox="0 0 9 10"><path d="M0.5 0.3h5l2.6 2.6v6.8H0.5z" fill="#8e9aa3"/><path d="M5.5 0.3v2.6h2.6" fill="#c0c6ca"/></svg>
<div class="t" style="left:50.00px;top:485.47px;font-size:9.600px;color:#bbbbbb;font-weight:normal;font-family:'Liberation Sans';">.gitignore</div>
<svg style="left:38.5px;top:498.16999999999996px" width="9" height="10" viewBox="0 0 9 10"><path d="M0.5 0.3h5l2.6 2.6v6.8H0.5z" fill="#8e9aa3"/><path d="M5.5 0.3v2.6h2.6" fill="#c0c6ca"/></svg>
<div class="t" style="left:50.00px;top:498.84px;font-size:9.600px;color:#bbbbbb;font-weight:normal;font-family:'Liberation Sans';">LICENSE.txt</div>
<svg style="left:38.0px;top:511.8399999999999px" width="10" height="10" viewBox="0 0 10 10"><rect x="0" y="2" width="9" height="6" fill="#8e9aa3"/><path d="M1.7 3.3l2 1.6-2 1.6" fill="none" stroke="#2f3336" stroke-width="0.9"/></svg>
<div class="t" style="left:50.00px;top:512.21px;font-size:9.600px;color:#bbbbbb;font-weight:normal;font-family:'Liberation Sans';">mvnw</div>
<svg style="left:38.5px;top:524.9100000000001px" width="9" height="10" viewBox="0 0 9 10"><path d="M0.5 0.3h5l2.6 2.6v6.8H0.5z" fill="#8e9aa3"/><path d="M5.5 0.3v2.6h2.6" fill="#c0c6ca"/></svg>
<div class="t" style="left:50.00px;top:525.58px;font-size:9.600px;color:#bbbbbb;font-weight:normal;font-family:'Liberation Sans';">mvnw.cmd</div>
<div class="t" style="left:36.5px;top:537.0799999999999px;font-size:12px;font-weight:bold;font-style:italic;color:#3d9ed8">m</div>
<div class="t" style="left:50.00px;top:538.95px;font-size:9.600px;color:#bbbbbb;font-weight:normal;font-family:'Liberation Sans';">pom.xml</div>
<svg style="left:38.5px;top:551.6500000000001px" width="9" height="10" viewBox="0 0 9 10"><path d="M0.5 0.3h5l2.6 2.6v6.8H0.5z" fill="#8e9aa3"/><path d="M5.5 0.3v2.6h2.6" fill="#c0c6ca"/><rect x="0" y="4.5" width="9" height="4.5" fill="#2f8fc4"/></svg>
<div class="t" style="left:50.00px;top:552.32px;font-size:9.600px;color:#bbbbbb;font-weight:normal;font-family:'Liberation Sans';">README.md</div>
<svg style="left:38.5px;top:565.02px" width="9" height="10" viewBox="0 0 9 10"><path d="M0.5 0.3h5l2.6 2.6v6.8H0.5z" fill="#8e9aa3"/><path d="M5.5 0.3v2.6h2.6" fill="#c0c6ca"/><rect x="3.5" y="5.5" width="3.5" height="3.5" fill="#222"/></svg>
<div class="t" style="left:50.00px;top:565.69px;font-size:9.600px;color:#98982a;font-weight:normal;font-family:'Liberation Sans';">scc-brewery.iml</div>
<svg style="left:14.100000000000001px;top:580.3900000000001px" width="6" height="6" viewBox="0 0 6 6"><path d="M0 0L5.2 2.8 0 5.6z" fill="#b0b3b6"/></svg>
<svg style="left:25.0px;top:578.3900000000001px" width="11" height="10" viewBox="0 0 11 10"><rect x="0" y="2" width="1.3" height="8" fill="#8e9aa3"/><rect x="2.2" y="0" width="1.3" height="10" fill="#5cb85c"/><rect x="4.4" y="1" width="1.3" height="9" fill="#3592c4"/><rect x="6.6" y="2" width="1.3" height="8" fill="#8e9aa3"/><rect x="8.8" y="3" width="1.3" height="7" fill="#8e9aa3"/></svg>
<div class="t" style="left:38.00px;top:579.06px;font-size:9.600px;color:#bbbbbb;font-weight:normal;font-family:'Liberation Sans';">External Libraries</div>
<svg style="left:14.100000000000001px;top:593.76px" width="6" height="6" viewBox="0 0 6 6"><path d="M0 0L5.2 2.8 0 5.6z" fill="#b0b3b6"/></svg>
<svg style="left:24.5px;top:591.06px" width="11" height="12" viewBox="0 0 11 12"><rect x="0.5" y="0" width="7" height="7" fill="#8e9aa3"/><circle cx="6.5" cy="7.5" r="3.8" fill="#2f9fd8" stroke="#39393b" stroke-width="0.6"/><path d="M6.5 5.5v2.2l1.3.8" stroke="#fff" stroke-width="0.8" fill="none"/></svg>
<div class="t" style="left:38.00px;top:592.43px;font-size:9.600px;color:#bbbbbb;font-weight:normal;font-family:'Liberation Sans';">Scratches and Consoles</div>
<div class="abs" style="left:326px;top:64px;width:1px;height:630px;background:#272728;"></div>
<div class="abs" style="left:327px;top:64px;width:813px;height:16px;background:#3b3c3e;"></div>
<div class="abs" style="left:327px;top:64px;width:677px;height:16px;background:#3e4042;"></div>
<div class="abs" style="left:327px;top:79px;width:813px;height:1px;background:#303133;"></div>
<div class="abs" style="left:650px;top:64px;width:162px;height:15px;background:#4e4b45;"></div>
<div class="abs" style="left:650px;top:78px;width:162px;height:2px;background:#4a88c7;"></div>
<svg style="left:332px;top:66.9px" width="10" height="10" viewBox="0 0 10 10"><circle cx="4.8" cy="4.8" r="4.6" fill="#2f9bc9"/><path d="M6.4 3.5a1.9 1.9 0 1 0 0 2.6" fill="none" stroke="#165a7a" stroke-width="1.1"/><path d="M7 -0.5l1 1.2 1.8-1.4" fill="none" stroke="#e8853a" stroke-width="1.2"/><circle cx="8.3" cy="0.8" r="1.3" fill="#e37a38"/><circle cx="9.3" cy="0" r="0.9" fill="#5cb85c"/></svg>
<div class="t" style="left:345.00px;top:68.14px;font-size:8.100px;color:#6897bb;font-weight:normal;font-family:'Liberation Sans';">BeerControllerIT.java</div>
<svg style="left:425px;top:69px" width="5" height="5" viewBox="0 0 5 5"><path d="M0.3 0.3l4.4 4.4M4.7 0.3L0.3 4.7" stroke="#6e7174" stroke-width="0.9"/></svg>
<svg style="left:441px;top:66.9px" width="10" height="10" viewBox="0 0 10 10"><circle cx="4.8" cy="4.8" r="4.6" fill="#2f9bc9"/><path d="M6.4 3.5a1.9 1.9 0 1 0 0 2.6" fill="none" stroke="#165a7a" stroke-width="1.1"/><path d="M7 -0.5l1 1.2 1.8-1.4" fill="none" stroke="#e8853a" stroke-width="1.2"/><circle cx="8.3" cy="0.8" r="1.3" fill="#e37a38"/><circle cx="9.3" cy="0" r="0.9" fill="#5cb85c"/></svg>
<div class="t" style="left:454.00px;top:68.14px;font-size:8.100px;color:#5ea35e;font-weight:normal;font-family:'Liberation Sans';">IndexControllerIT.java</div>
<svg style="left:537px;top:69px" width="5" height="5" viewBox="0 0 5 5"><path d="M0.3 0.3l4.4 4.4M4.7 0.3L0.3 4.7" stroke="#6e7174" stroke-width="0.9"/></svg>
<svg style="left:553px;top:66.9px" width="10" height="10" viewBox="0 0 10 10"><circle cx="4.8" cy="4.8" r="4.6" fill="#2f9bc9"/><path d="M6.4 3.5a1.9 1.9 0 1 0 0 2.6" fill="none" stroke="#165a7a" stroke-width="1.1"/></svg>
<div class="t" style="left:565.00px;top:68.14px;font-size:8.100px;color:#5ea35e;font-weight:normal;font-family:'Liberation Sans';">SecurityConfig.java</div>
<svg style="left:640.5px;top:69px" width="5" height="5" viewBox="0 0 5 5"><path d="M0.3 0.3l4.4 4.4M4.7 0.3L0.3 4.7" stroke="#6e7174" stroke-width="0.9"/></svg>
<svg style="left:656px;top:66.9px" width="10" height="10" viewBox="0 0 10 10"><circle cx="4.8" cy="4.8" r="4.6" fill="#2f9bc9"/><path d="M6.4 3.5a1.9 1.9 0 1 0 0 2.6" fill="none" stroke="#165a7a" stroke-width="1.1"/><rect x="6" y="6" width="4" height="4" fill="#c9cdd0"/></svg>
<div class="t" style="left:669.00px;top:68.14px;font-size:8.100px;color:#c8c8c8;font-weight:normal;font-family:'Liberation Sans';">WebSecurityConfigurerAdapter.java</div>
<svg style="left:801px;top:69px" width="5" height="5" viewBox="0 0 5 5"><path d="M0.3 0.3l4.4 4.4M4.7 0.3L0.3 4.7" stroke="#6e7174" stroke-width="0.9"/></svg>
<svg style="left:817px;top:66.9px" width="10" height="10" viewBox="0 0 10 10"><circle cx="4.8" cy="4.8" r="4.6" fill="#2f9bc9"/><path d="M6.4 3.5a1.9 1.9 0 1 0 0 2.6" fill="none" stroke="#165a7a" stroke-width="1.1"/></svg>
<div class="t" style="left:830.00px;top:68.14px;font-size:8.100px;color:#5ea35e;font-weight:normal;font-family:'Liberation Sans';">BaseIT.java</div>
<svg style="left:877px;top:69px" width="5" height="5" viewBox="0 0 5 5"><path d="M0.3 0.3l4.4 4.4M4.7 0.3L0.3 4.7" stroke="#6e7174" stroke-width="0.9"/></svg>
<svg style="left:892px;top:66.9px" width="10" height="10" viewBox="0 0 10 10"><circle cx="4.8" cy="4.8" r="4.6" fill="#2f9bc9"/><path d="M6.4 3.5a1.9 1.9 0 1 0 0 2.6" fill="none" stroke="#165a7a" stroke-width="1.1"/><path d="M7 -0.5l1 1.2 1.8-1.4" fill="none" stroke="#e8853a" stroke-width="1.2"/><circle cx="8.3" cy="0.8" r="1.3" fill="#e37a38"/><circle cx="9.3" cy="0" r="0.9" fill="#5cb85c"/></svg>
<div class="t" style="left:905.00px;top:68.14px;font-size:8.100px;color:#bbbbbb;font-weight:normal;font-family:'Liberation Sans';">BeerControllerTest.java</div>
<svg style="left:994px;top:69px" width="5" height="5" viewBox="0 0 5 5"><path d="M0.3 0.3l4.4 4.4M4.7 0.3L0.3 4.7" stroke="#6e7174" stroke-width="0.9"/></svg>
<div class="abs" style="left:327px;top:80px;width:813px;height:614px;background:#272728;"></div>
<div class="abs" style="left:327px;top:80px;width:59px;height:614px;background:#2e2f31;"></div>
<div class="abs" style="left:386px;top:80px;width:1px;height:614px;background:#414244;"></div>
<div class="abs" style="left:387px;top:141px;width:746px;height:16.5px;background:#2e2e2f;"></div>
<div class="ln" style="left:320px;top:77px;width:27.8px;color:#606366">91</div>
<div class="code" style="left:390.6px;top:77px"><span class="c"> <span style="position:relative;top:2.2px">*</span></span></div>
<div class="ln" style="left:320px;top:93px;width:27.8px;color:#606366">92</div>
<div class="code" style="left:390.6px;top:93px"><span class="c"> <span style="position:relative;top:2.2px">*</span> </span><span class="c" style="text-decoration:underline">@author</span><span class="c"> Rob Winch</span></div>
<div class="ln" style="left:320px;top:109px;width:27.8px;color:#606366">93</div>
<div class="code" style="left:390.6px;top:109px"><span class="c"> <span style="position:relative;top:2.2px">*</span>/</span></div>
<div class="ln" style="left:320px;top:125px;width:27.8px;color:#606366">94</div>
<div class="code" style="left:390.6px;top:125px"><span class="an">@Order</span>(<span class="n">100</span>)</div>
<div class="ln" style="left:320px;top:141px;width:27.8px;color:#a4a3a3">95</div>
<div class="code" style="left:390.6px;top:141px"><span class="k">public abstract class </span><span class="hl">WebSecurityConfigurerAdapter</span> <span class="k">implements</span></div>
<div class="ln" style="left:320px;top:157px;width:27.8px;color:#606366">96</div>
<div class="code" style="left:390.6px;top:157px">        WebSecurityConfigurer&lt;WebSecurity&gt; {</div>
<div class="ln" style="left:320px;top:173px;width:27.8px;color:#606366">97</div>
<div class="code" style="left:390.6px;top:173px">    <span class="k">private final </span>Log <span class="f">logger</span> = LogFactory.<span class="it">getLog</span>(<span class="hl">WebSecurityConfigurerAdapter</span><span class="k">.class</span>)<span class="k">;</span></div>
<div class="ln" style="left:320px;top:189px;width:27.8px;color:#606366">98</div>
<div class="code" style="left:390.6px;top:189px"></div>
<div class="ln" style="left:320px;top:205px;width:27.8px;color:#606366">99</div>
<div class="code" style="left:390.6px;top:205px">    <span class="k">private </span>ApplicationContext <span class="f">context</span><span class="k">;</span></div>
<div class="ln" style="left:320px;top:221px;width:27.8px;color:#606366">100</div>
<div class="code" style="left:390.6px;top:221px"></div>
<div class="ln" style="left:320px;top:237px;width:27.8px;color:#606366">101</div>
<div class="code" style="left:390.6px;top:237px">    <span class="k">private </span>ContentNegotiationStrategy <span class="f">contentNegotiationStrategy</span> = <span class="k">new </span>HeaderContentNegotiationStrategy()<span class="k">;</span></div>
<div class="ln" style="left:320px;top:253px;width:27.8px;color:#606366">102</div>
<div class="code" style="left:390.6px;top:253px"></div>
<div class="ln" style="left:320px;top:269px;width:27.8px;color:#606366">103</div>
<div class="code" style="left:390.6px;top:269px">    <span class="k">private </span>ObjectPostProcessor&lt;Object&gt; <span class="f">objectPostProcessor</span> = <span class="k">new </span>ObjectPostProcessor&lt;Object&gt;() {</div>
<div class="ln" style="left:320px;top:285px;width:27.8px;color:#606366">104</div>
<div class="code" style="left:390.6px;top:285px">        <span class="k">public </span>&lt;<span class="tp">T</span>&gt; <span class="tp">T </span><span class="m">postProcess</span>(<span class="tp">T</span> object) {</div>
<div class="ln" style="left:320px;top:301px;width:27.8px;color:#606366">105</div>
<div class="code" style="left:390.6px;top:301px">            <span class="k">throw new </span>IllegalStateException(</div>
<div class="ln" style="left:320px;top:317px;width:27.8px;color:#606366">106</div>
<div class="code" style="left:390.6px;top:317px">                    ObjectPostProcessor<span class="k">.class</span>.getName()</div>
<div class="ln" style="left:320px;top:333px;width:27.8px;color:#606366">107</div>
<div class="code" style="left:390.6px;top:333px">                            + <span class="s">&quot; is a required bean. Ensure you have used @EnableWebSecurity and @Configuration&quot;</span>)</div>
<div class="ln" style="left:320px;top:349px;width:27.8px;color:#606366">108</div>
<div class="code" style="left:390.6px;top:349px">        }</div>
<div class="ln" style="left:320px;top:365px;width:27.8px;color:#606366">109</div>
<div class="code" style="left:390.6px;top:365px">    };</div>
<div class="ln" style="left:320px;top:381px;width:27.8px;color:#606366">110</div>
<div class="code" style="left:390.6px;top:381px"></div>
<div class="ln" style="left:320px;top:397px;width:27.8px;color:#606366">111</div>
<div class="code" style="left:390.6px;top:397px">    <span class="k">private </span>AuthenticationConfiguration <span class="f">authenticationConfiguration</span><span class="k">;</span></div>
<div class="ln" style="left:320px;top:413px;width:27.8px;color:#606366">112</div>
<div class="code" style="left:390.6px;top:413px">    <span class="k">private </span>AuthenticationManagerBuilder <span class="f">authenticationBuilder</span><span class="k">;</span></div>
<div class="ln" style="left:320px;top:429px;width:27.8px;color:#606366">113</div>
<div class="code" style="left:390.6px;top:429px">    <span class="k">private </span>AuthenticationManagerBuilder <span class="f">localConfigureAuthenticationBldr</span><span class="k">;</span></div>
<div class="ln" style="left:320px;top:445px;width:27.8px;color:#606366">114</div>
<div class="code" style="left:390.6px;top:445px">    <span class="k">private boolean </span><span class="f">disableLocalConfigureAuthenticationBldr</span><span class="k">;</span></div>
<div class="ln" style="left:320px;top:461px;width:27.8px;color:#606366">115</div>
<div class="code" style="left:390.6px;top:461px">    <span class="k">private boolean </span><span class="f">authenticationManagerInitialized</span><span class="k">;</span></div>
<div class="ln" style="left:320px;top:477px;width:27.8px;color:#606366">116</div>
<div class="code" style="left:390.6px;top:477px">    <span class="k">private </span>AuthenticationManager <span class="f">authenticationManager</span><span class="k">;</span></div>
<div class="ln" style="left:320px;top:493px;width:27.8px;color:#606366">117</div>
<div class="code" style="left:390.6px;top:493px">    <span class="k">private </span>AuthenticationTrustResolver <span class="f">trustResolver</span> = <span class="k">new </span>AuthenticationTrustResolverImpl()<span class="k">;</span></div>
<div class="ln" style="left:320px;top:509px;width:27.8px;color:#606366">118</div>
<div class="code" style="left:390.6px;top:509px">    <span class="k">private </span>HttpSecurity <span class="f">http</span><span class="k">;</span></div>
<div class="ln" style="left:320px;top:525px;width:27.8px;color:#606366">119</div>
<div class="code" style="left:390.6px;top:525px">    <span class="k">private boolean </span><span class="f">disableDefaults</span><span class="k">;</span></div>
<div class="ln" style="left:320px;top:541px;width:27.8px;color:#606366">120</div>
<div class="code" style="left:390.6px;top:541px"></div>
<div class="ln" style="left:320px;top:557px;width:27.8px;color:#606366">121</div>
<div class="code" style="left:390.6px;top:557px"><span class="c">    /<span style="position:relative;top:2.2px">*</span><span style="position:relative;top:2.2px">*</span></span></div>
<div class="ln" style="left:320px;top:573px;width:27.8px;color:#606366">122</div>
<div class="code" style="left:390.6px;top:573px"><span class="c">     <span style="position:relative;top:2.2px">*</span> Creates an instance with the default configuration enabled.</span></div>
<div class="ln" style="left:320px;top:589px;width:27.8px;color:#606366">123</div>
<div class="code" style="left:390.6px;top:589px"><span class="c">     <span style="position:relative;top:2.2px">*</span>/</span></div>
<div class="ln" style="left:320px;top:605px;width:27.8px;color:#606366">124</div>
<div class="code" style="left:390.6px;top:605px"><span class="k">    protected </span><span class="m">WebSecurityConfigurerAdapter</span>()</div>
<div class="abs" style="left:685px;top:606.5px;width:20px;height:13.5px;background:#333334;"></div>
<div class="code" style="left:691.6500000000001px;top:605px">{</div>
<div class="code" style="left:705px;top:605px"><span class="k">this</span>(</div>
<div class="abs" style="left:739px;top:606.5px;width:86px;height:13.5px;background:#333334;border-radius:2px"></div>
<div class="t" style="left:742.50px;top:607.78px;font-size:10.892px;color:#7a7a7a;font-weight:normal;font-family:'Liberation Sans';">disableDefaults:</div>
<div class="code" style="left:827px;top:605px"><span class="k">false</span>)<span class="k">;</span></div>
<div class="abs" style="left:875px;top:606.5px;width:12px;height:13.5px;background:#333334;"></div>
<div class="code" style="left:879.5px;top:605px">}</div>
<div class="ln" style="left:320px;top:621px;width:27.8px;color:#606366">127</div>
<div class="code" style="left:390.6px;top:621px"></div>
<div class="ln" style="left:320px;top:637px;width:27.8px;color:#606366">128</div>
<div class="code" style="left:390.6px;top:637px"><span class="c">    /<span style="position:relative;top:2.2px">*</span><span style="position:relative;top:2.2px">*</span></span></div>
<div class="ln" style="left:320px;top:653px;width:27.8px;color:#606366">129</div>
<div class="code" style="left:390.6px;top:653px"><span class="c">     <span style="position:relative;top:2.2px">*</span> Creates an instance which allows specifying if the default configuration should be</span></div>
<div class="ln" style="left:320px;top:669px;width:27.8px;color:#606366">130</div>
<div class="code" style="left:390.6px;top:669px"><span class="c">     <span style="position:relative;top:2.2px">*</span> enabled. Disabling the default configuration should be considered more advanced</span></div>
<div class="ln" style="left:320px;top:685px;width:27.8px;color:#606366">131</div>
<div class="code" style="left:390.6px;top:685px"><span class="c">     <span style="position:relative;top:2.2px">*</span> usage as it requires more understanding of how the framework is implemented.</span></div>
<svg style="left:382px;top:114px" width="8" height="8" viewBox="0 0 8 8"><path d="M0.5 7.5h7V3L4 0.5 0.5 3z" fill="#2e2f31" stroke="#505254" stroke-width="0.9"/><path d="M2 4.5h4" stroke="#505254" stroke-width="0.8"/></svg>
<svg style="left:382px;top:274px" width="8" height="8" viewBox="0 0 8 8"><path d="M0.5 0.5h7v4.5L4 7.5 0.5 5z" fill="#2e2f31" stroke="#505254" stroke-width="0.9"/><path d="M2 3.5h4" stroke="#505254" stroke-width="0.8"/></svg>
<svg style="left:382px;top:290px" width="8" height="8" viewBox="0 0 8 8"><path d="M0.5 0.5h7v4.5L4 7.5 0.5 5z" fill="#2e2f31" stroke="#505254" stroke-width="0.9"/><path d="M2 3.5h4" stroke="#505254" stroke-width="0.8"/></svg>
<svg style="left:382px;top:354px" width="8" height="8" viewBox="0 0 8 8"><path d="M0.5 7.5h7V3L4 0.5 0.5 3z" fill="#2e2f31" stroke="#505254" stroke-width="0.9"/><path d="M2 4.5h4" stroke="#505254" stroke-width="0.8"/></svg>
<svg style="left:382px;top:370px" width="8" height="8" viewBox="0 0 8 8"><path d="M0.5 7.5h7V3L4 0.5 0.5 3z" fill="#2e2f31" stroke="#505254" stroke-width="0.9"/><path d="M2 4.5h4" stroke="#505254" stroke-width="0.8"/></svg>
<svg style="left:382px;top:562px" width="8" height="8" viewBox="0 0 8 8"><path d="M0.5 0.5h7v4.5L4 7.5 0.5 5z" fill="#2e2f31" stroke="#505254" stroke-width="0.9"/><path d="M2 3.5h4" stroke="#505254" stroke-width="0.8"/></svg>
<svg style="left:382px;top:594px" width="8" height="8" viewBox="0 0 8 8"><path d="M0.5 7.5h7V3L4 0.5 0.5 3z" fill="#2e2f31" stroke="#505254" stroke-width="0.9"/><path d="M2 4.5h4" stroke="#505254" stroke-width="0.8"/></svg>
<svg style="left:382px;top:610px" width="8" height="8" viewBox="0 0 8 8"><rect x="0.5" y="0.5" width="7" height="7" fill="#2e2f31" stroke="#505254" stroke-width="0.9"/><path d="M2 4h4M4 2v4" stroke="#505254" stroke-width="0.8"/></svg>
<svg style="left:382px;top:642px" width="8" height="8" viewBox="0 0 8 8"><path d="M0.5 0.5h7v4.5L4 7.5 0.5 5z" fill="#2e2f31" stroke="#505254" stroke-width="0.9"/><path d="M2 3.5h4" stroke="#505254" stroke-width="0.8"/></svg>
<svg style="left:365px;top:562px" width="9" height="8" viewBox="0 0 9 8"><path d="M0.5 0v8" stroke="#75787b" stroke-width="0.9"/><path d="M2.5 0.8h6M2.5 3h6M2.5 5.2h4.5M2.5 7.4h3" stroke="#75787b" stroke-width="0.8"/></svg>
<svg style="left:365px;top:642px" width="9" height="8" viewBox="0 0 9 8"><path d="M0.5 0v8" stroke="#75787b" stroke-width="0.9"/><path d="M2.5 0.8h6M2.5 3h6M2.5 5.2h4.5M2.5 7.4h3" stroke="#75787b" stroke-width="0.8"/></svg>
<svg style="left:352px;top:145px" width="12" height="11" viewBox="0 0 12 11"><circle cx="5" cy="4.8" r="4.6" fill="#4aa84a"/><path d="M1.5 1.5l5 4" stroke="#2b2b2b" stroke-width="0.8"/><circle cx="8" cy="7.6" r="3" fill="#2f9bc9" stroke="#2b2b2b" stroke-width="0.6"/><circle cx="8" cy="7.6" r="0.9" fill="#1a5c80"/></svg>
<svg style="left:365px;top:146.5px" width="11" height="10" viewBox="0 0 11 10"><circle cx="3.6" cy="3.8" r="3.4" fill="#2f9bc9"/><circle cx="3.6" cy="3.8" r="1.1" fill="#1a5c80"/><path d="M9 -1.5v8" stroke="#c8c8c8" stroke-width="0.9"/><path d="M7.3 5.5L9 7.8 10.7 5.5z" fill="#c8c8c8"/></svg>
<svg style="left:352px;top:290px" width="10" height="9" viewBox="0 0 10 9"><circle cx="3.2" cy="4.2" r="2.8" fill="none" stroke="#4aa84a" stroke-width="1.3"/><path d="M7 8V0.8" stroke="#e05555" stroke-width="1"/><path d="M5.3 2.6L7 0.2 8.7 2.6z" fill="#e05555"/></svg>
<svg style="left:1131px;top:82px" width="8" height="7" viewBox="0 0 8 7"><path d="M0.6 3.4L3 5.8 7.4 0.8" fill="none" stroke="#4caf50" stroke-width="1.5"/></svg>
<div class="abs" style="left:1133px;top:119px;width:4.5px;height:39px;background:#555658;border-radius:3px"></div>
<div class="abs" style="left:1131px;top:124px;width:9px;height:1.5px;background:#3f7a3f;"></div>
<div class="abs" style="left:393px;top:688.5px;width:435px;height:4.5px;background:#47484a;border-radius:3px"></div>
<svg style="left:745.5px;top:315px" width="9" height="19" viewBox="0 0 9 19"><path d="M1 1h3.5M4.5 1h3.5M4.5 1v17M1 18h3.5M4.5 18h3.5" stroke="#111" stroke-width="2.6" stroke-linecap="round"/><path d="M1.3 1c1.8 0 3.2 .4 3.2 2M7.7 1c-1.8 0-3.2 .4-3.2 2M4.5 2.5v14M1.3 18c1.8 0 3.2-.4 3.2-2M7.7 18c-1.8 0-3.2-.4-3.2-2" fill="none" stroke="#e6e6e6" stroke-width="1.2"/></svg>
<div class="abs" style="left:1140px;top:64px;width:1px;height:630px;background:#272728;"></div>
<div class="abs" style="left:1141px;top:64px;width:129px;height:630px;background:#39393b;"></div>
<div class="t" style="left:1144.00px;top:67.80px;font-size:9.100px;color:#bbbbbb;font-weight:normal;font-family:'Liberation Sans';">Maven</div>
<svg style="left:1240px;top:68px" width="9" height="9" viewBox="0 0 9 9"><circle cx="4.5" cy="4.5" r="2.9" fill="none" stroke="#b5b8bb" stroke-width="2.2" stroke-dasharray="1.6 1.1"/><circle cx="4.5" cy="4.5" r="2.7" fill="#b5b8bb"/><circle cx="4.5" cy="4.5" r="1.1" fill="#39393b"/></svg>
<div class="abs" style="left:1257px;top:71.8px;width:9px;height:1.3px;background:#b5b8bb;"></div>
<div class="abs" style="left:1141px;top:80px;width:129px;height:1px;background:#363839;"></div>
<div class="abs" style="left:1141px;top:100px;width:129px;height:1px;background:#353739;"></div>
<svg style="left:1146px;top:86px" width="9" height="9" viewBox="0 0 9 9"><path d="M1 4.2a3.4 3.4 0 0 1 6-2" fill="none" stroke="#b5b8bb" stroke-width="1.2"/><path d="M8 4.8a3.4 3.4 0 0 1-6 2" fill="none" stroke="#b5b8bb" stroke-width="1.2"/><path d="M8.4 0.4v3h-3z" fill="#b5b8bb"/><path d="M0.6 8.6v-3h3z" fill="#b5b8bb"/></svg>
<svg style="left:1162px;top:85.5px" width="12" height="11" viewBox="0 0 12 11"><path d="M0 0.5h3.5l1 1h4.5v6H0z" fill="#b5b8bb"/><circle cx="8.8" cy="7.8" r="2.3" fill="#39393b" stroke="#b5b8bb" stroke-width="0.9"/></svg>
<svg style="left:1180px;top:85px" width="12" height="11" viewBox="0 0 12 11"><path d="M6 0v5.5M3.5 3.2L6 5.8 8.5 3.2" fill="none" stroke="#b5b8bb" stroke-width="1.2"/><path d="M0.5 7.5h6.5l3 2" fill="none" stroke="#b5b8bb" stroke-width="1.2"/></svg>
<div class="abs" style="left:1196px;top:84px;width:1px;height:13px;background:#505356;"></div>
<svg style="left:1203px;top:86px" width="9" height="9" viewBox="0 0 9 9"><path d="M4.5 0.5v8M0.5 4.5h8" stroke="#b5b8bb" stroke-width="1.3"/></svg>
<div class="abs" style="left:1218px;top:84px;width:1px;height:13px;background:#505356;"></div>
<svg style="left:1226px;top:85.5px" width="8" height="9" viewBox="0 0 8 9"><path d="M0.5 0.3L7.8 4.5 0.5 8.7z" fill="#3fae4a"/></svg>
<div class="t" style="left:1241.00px;top:84.84px;font-size:12.000px;color:#c0c0c0;font-weight:bold;font-family:'Liberation Sans';font-style:italic">m</div>
<div class="t" style="left:1262.00px;top:86.73px;font-size:8.000px;color:#8a8d90;font-weight:normal;font-family:'Liberation Sans';">»</div>
<div class="abs" style="left:1141px;top:194.89px;width:129px;height:13.4px;background:#0d293e;"></div>
<svg style="left:1141.9px;top:105.2px" width="6" height="6" viewBox="0 0 6 6"><path d="M0 0L5.2 2.8 0 5.6z" fill="#b0b3b6"/></svg>
<svg style="left:1154px;top:103.5px" width="11" height="10" viewBox="0 0 11 10"><path d="M0 0.3h3.6l1.1 1.3H9.6v6.8H0z" fill="#8e9aa3"/><path d="M3.5 6.5l2 2 4-4.5" fill="none" stroke="#2aa6e0" stroke-width="1.6"/></svg>
<div class="t" style="left:1166.00px;top:103.34px;font-size:9.400px;color:#bbbbbb;font-weight:normal;font-family:'Liberation Sans';">Profiles</div>
<svg style="left:1141.5px;top:119.07000000000001px" width="6" height="5" viewBox="0 0 6 5"><path d="M0 0H6L3 4.8z" fill="#b0b3b6"/></svg>
<svg style="left:1155.5px;top:116.37px" width="10" height="11" viewBox="0 0 10 11"><path d="M0.5 0.3h4.5l2.6 2.6v6.8H0.5z" fill="#8e9aa3"/><rect x="3" y="5.5" width="6.5" height="5" fill="#2f8fc4"/></svg>
<div class="t" style="left:1166.00px;top:116.71px;font-size:9.400px;color:#bbbbbb;font-weight:normal;font-family:'Liberation Sans';">SFG Brewery Spring MVC</div>
<svg style="left:1153.5px;top:132.44px" width="6" height="5" viewBox="0 0 6 5"><path d="M0 0H6L3 4.8z" fill="#b0b3b6"/></svg>
<svg style="left:1166px;top:130.24px" width="11" height="10" viewBox="0 0 11 10"><path d="M0 0.3h3.6l1.1 1.3H9.6v6.8H0z" fill="#8e9aa3"/><circle cx="7.8" cy="7.5" r="2.3" fill="#2aa6e0" stroke="#39393b" stroke-width="0.5"/></svg>
<div class="t" style="left:1178.00px;top:130.08px;font-size:9.400px;color:#bbbbbb;font-weight:normal;font-family:'Liberation Sans';">Lifecycle</div>
<svg style="left:1179px;top:144.11px" width="8" height="8" viewBox="0 0 8 8"><circle cx="4" cy="4" r="2.6" fill="none" stroke="#8e9ba5" stroke-width="2.2" stroke-dasharray="1.5 0.8"/><circle cx="4" cy="4" r="2.5" fill="#8e9ba5"/><circle cx="4" cy="4" r="1" fill="#39393b"/></svg>
<div class="t" style="left:1190.00px;top:143.45px;font-size:9.400px;color:#bbbbbb;font-weight:normal;font-family:'Liberation Sans';">clean</div>
<svg style="left:1179px;top:157.48px" width="8" height="8" viewBox="0 0 8 8"><circle cx="4" cy="4" r="2.6" fill="none" stroke="#8e9ba5" stroke-width="2.2" stroke-dasharray="1.5 0.8"/><circle cx="4" cy="4" r="2.5" fill="#8e9ba5"/><circle cx="4" cy="4" r="1" fill="#39393b"/></svg>
<div class="t" style="left:1190.00px;top:156.82px;font-size:9.400px;color:#bbbbbb;font-weight:normal;font-family:'Liberation Sans';">validate</div>
<svg style="left:1179px;top:170.85px" width="8" height="8" viewBox="0 0 8 8"><circle cx="4" cy="4" r="2.6" fill="none" stroke="#8e9ba5" stroke-width="2.2" stroke-dasharray="1.5 0.8"/><circle cx="4" cy="4" r="2.5" fill="#8e9ba5"/><circle cx="4" cy="4" r="1" fill="#39393b"/></svg>
<div class="t" style="left:1190.00px;top:170.19px;font-size:9.400px;color:#bbbbbb;font-weight:normal;font-family:'Liberation Sans';">compile</div>
<svg style="left:1179px;top:184.22px" width="8" height="8" viewBox="0 0 8 8"><circle cx="4" cy="4" r="2.6" fill="none" stroke="#8e9ba5" stroke-width="2.2" stroke-dasharray="1.5 0.8"/><circle cx="4" cy="4" r="2.5" fill="#8e9ba5"/><circle cx="4" cy="4" r="1" fill="#39393b"/></svg>
<div class="t" style="left:1190.00px;top:183.56px;font-size:9.400px;color:#bbbbbb;font-weight:normal;font-family:'Liberation Sans';">test</div>
<svg style="left:1179px;top:197.58999999999997px" width="8" height="8" viewBox="0 0 8 8"><circle cx="4" cy="4" r="2.6" fill="none" stroke="#8e9ba5" stroke-width="2.2" stroke-dasharray="1.5 0.8"/><circle cx="4" cy="4" r="2.5" fill="#8e9ba5"/><circle cx="4" cy="4" r="1" fill="#39393b"/></svg>
<div class="t" style="left:1190.00px;top:196.93px;font-size:9.400px;color:#bbbbbb;font-weight:normal;font-family:'Liberation Sans';">package</div>
<svg style="left:1179px;top:210.95999999999998px" width="8" height="8" viewBox="0 0 8 8"><circle cx="4" cy="4" r="2.6" fill="none" stroke="#8e9ba5" stroke-width="2.2" stroke-dasharray="1.5 0.8"/><circle cx="4" cy="4" r="2.5" fill="#8e9ba5"/><circle cx="4" cy="4" r="1" fill="#39393b"/></svg>
<div class="t" style="left:1190.00px;top:210.30px;font-size:9.400px;color:#bbbbbb;font-weight:normal;font-family:'Liberation Sans';">verify</div>
<svg style="left:1179px;top:224.32999999999998px" width="8" height="8" viewBox="0 0 8 8"><circle cx="4" cy="4" r="2.6" fill="none" stroke="#8e9ba5" stroke-width="2.2" stroke-dasharray="1.5 0.8"/><circle cx="4" cy="4" r="2.5" fill="#8e9ba5"/><circle cx="4" cy="4" r="1" fill="#39393b"/></svg>
<div class="t" style="left:1190.00px;top:223.67px;font-size:9.400px;color:#bbbbbb;font-weight:normal;font-family:'Liberation Sans';">install</div>
<svg style="left:1179px;top:237.7px" width="8" height="8" viewBox="0 0 8 8"><circle cx="4" cy="4" r="2.6" fill="none" stroke="#8e9ba5" stroke-width="2.2" stroke-dasharray="1.5 0.8"/><circle cx="4" cy="4" r="2.5" fill="#8e9ba5"/><circle cx="4" cy="4" r="1" fill="#39393b"/></svg>
<div class="t" style="left:1190.00px;top:237.04px;font-size:9.400px;color:#bbbbbb;font-weight:normal;font-family:'Liberation Sans';">site</div>
<svg style="left:1179px;top:251.07px" width="8" height="8" viewBox="0 0 8 8"><circle cx="4" cy="4" r="2.6" fill="none" stroke="#8e9ba5" stroke-width="2.2" stroke-dasharray="1.5 0.8"/><circle cx="4" cy="4" r="2.5" fill="#8e9ba5"/><circle cx="4" cy="4" r="1" fill="#39393b"/></svg>
<div class="t" style="left:1190.00px;top:250.41px;font-size:9.400px;color:#bbbbbb;font-weight:normal;font-family:'Liberation Sans';">deploy</div>
<svg style="left:1153.9px;top:265.64px" width="6" height="6" viewBox="0 0 6 6"><path d="M0 0L5.2 2.8 0 5.6z" fill="#b0b3b6"/></svg>
<svg style="left:1166px;top:263.94px" width="11" height="10" viewBox="0 0 11 10"><path d="M0 0.3h3.6l1.1 1.3H9.6v6.8H0z" fill="#8e9aa3"/><circle cx="7.8" cy="7.5" r="2.3" fill="#2aa6e0" stroke="#39393b" stroke-width="0.5"/></svg>
<div class="t" style="left:1178.00px;top:263.78px;font-size:9.400px;color:#bbbbbb;font-weight:normal;font-family:'Liberation Sans';">Plugins</div>
<svg style="left:1153.9px;top:279.01px" width="6" height="6" viewBox="0 0 6 6"><path d="M0 0L5.2 2.8 0 5.6z" fill="#b0b3b6"/></svg>
<svg style="left:1166px;top:277.31px" width="11" height="10" viewBox="0 0 11 10"><path d="M0 0.3h3.6l1.1 1.3H9.6v6.8H0z" fill="#8e9aa3"/><rect x="5.5" y="4.5" width="1.2" height="5" fill="#5cb85c"/><rect x="7.3" y="3.5" width="1.2" height="6" fill="#2aa6e0"/><rect x="9.1" y="5" width="1.2" height="4.5" fill="#e8853a"/></svg>
<div class="t" style="left:1178.00px;top:277.15px;font-size:9.400px;color:#bbbbbb;font-weight:normal;font-family:'Liberation Sans';">Dependencies</div>
<div class="abs" style="left:1270px;top:64px;width:10px;height:630px;background:#39393b;"></div>
<div class="abs" style="left:1270px;top:64px;width:1px;height:630px;background:#323335;"></div>
<div class="abs" style="left:1270px;top:218px;width:10px;height:46px;background:#2d2f31;"></div>
<svg style="left:1270.5px;top:68px" width="10" height="11" viewBox="0 0 10 11"><path d="M1 1l8 9M9 1L1 10" stroke="#3fb0c8" stroke-width="2"/><circle cx="1.5" cy="1.5" r="1.4" fill="#e5c43a"/><circle cx="1.5" cy="9.5" r="1.4" fill="#e5c43a"/></svg>
<div class="t" style="left:1254.30px;top:94.99px;width:43.80px;height:7.8px;font-size:7.8px;color:#a8a8a8;font-weight:normal;text-align:center;transform:rotate(90deg) scaleX(1.036)">TCPMON</div>
<svg style="left:1272px;top:128px" width="7" height="7" viewBox="0 0 7 7"><path d="M3.5 0v7M0.5 2l6 3M6.5 2l-6 3" stroke="#a8a8a8" stroke-width="1"/></svg>
<div class="t" style="left:1265.35px;top:140.49px;width:21.71px;height:7.8px;font-size:7.8px;color:#a8a8a8;font-weight:normal;text-align:center;transform:rotate(90deg) scaleX(1.196)">Ant</div>
<svg style="left:1272.5px;top:166.5px" width="7" height="7" viewBox="0 0 7 7"><rect x="0.5" y="0.5" width="6" height="6" fill="none" stroke="#a8a8a8" stroke-width="1"/><path d="M2.2 0.5v6M4 0.5v6" stroke="#a8a8a8" stroke-width="0.8"/></svg>
<div class="t" style="left:1254.51px;top:188.99px;width:43.39px;height:7.8px;font-size:7.8px;color:#a8a8a8;font-weight:normal;text-align:center;transform:rotate(90deg) scaleX(1.048)">Database</div>
<div class="t" style="left:1271.20px;top:223.73px;font-size:8.000px;color:#c8c8c8;font-weight:bold;font-family:'Liberation Sans';font-style:italic">m</div>
<div class="t" style="left:1259.06px;top:243.49px;width:34.28px;height:7.8px;font-size:7.8px;color:#d0d0d0;font-weight:bold;text-align:center;transform:rotate(90deg) scaleX(1.071)">Maven</div>
<svg style="left:1272px;top:273px" width="7" height="7" viewBox="0 0 7 7"><circle cx="3.5" cy="3.5" r="3" fill="none" stroke="#a8a8a8" stroke-width="1.1"/><path d="M2 3.5l1.2 1.2 2-2.4" fill="none" stroke="#a8a8a8" stroke-width="0.9"/></svg>
<div class="t" style="left:1244.17px;top:307.49px;width:64.06px;height:7.8px;font-size:7.8px;color:#a8a8a8;font-weight:normal;text-align:center;transform:rotate(90deg) scaleX(1.110)">Bean Validation</div>
<div class="abs" style="left:0px;top:694px;width:1280px;height:1px;background:#313234;"></div>
<div class="abs" style="left:0px;top:695px;width:1280px;height:14px;background:#3b3c3e;"></div>
<svg style="left:19px;top:698px" width="8" height="9" viewBox="0 0 8 9"><path d="M0.5 0.5L6.5 4 0.5 7.5z" fill="#a8a8a8"/><circle cx="5.5" cy="7.5" r="1.6" fill="#4caf50"/></svg>
<div class="t" style="left:29.00px;top:697.97px;font-size:8.300px;color:#a8a8a8;font-weight:normal;font-family:'Liberation Sans';">4: Run</div>
<svg style="left:67px;top:698px" width="7" height="8" viewBox="0 0 7 8"><path d="M1 0v8M1 6h3V3M4 3l-1.5-2M4 3l1.5-2M4 1v0" fill="none" stroke="#a8a8a8" stroke-width="1.3"/></svg>
<div class="t" style="left:77.00px;top:697.97px;font-size:8.300px;color:#a8a8a8;font-weight:normal;font-family:'Liberation Sans';">9: Git</div>
<svg style="left:110px;top:697.5px" width="8" height="8" viewBox="0 0 8 8"><rect x="0" y="0" width="8" height="8" fill="#a8a8a8"/><path d="M1.5 2l2 1.5-2 1.5" fill="none" stroke="#39393b" stroke-width="0.9"/><path d="M4 6h2.5" stroke="#39393b" stroke-width="0.9"/></svg>
<div class="t" style="left:121.00px;top:697.97px;font-size:8.300px;color:#a8a8a8;font-weight:normal;font-family:'Liberation Sans';">Terminal</div>
<svg style="left:166px;top:697.5px" width="8" height="8" viewBox="0 0 8 8"><path d="M2 0h4l2 4-2 4H2L0 4z" fill="#a8a8a8"/><path d="M3 2.2l2.3 1.8L3 5.8z" fill="#39393b"/></svg>
<div class="t" style="left:177.00px;top:697.97px;font-size:8.300px;color:#a8a8a8;font-weight:normal;font-family:'Liberation Sans';">8: Services</div>
<svg style="left:231px;top:697px" width="9" height="9" viewBox="0 0 9 9"><path d="M0.5 2.2L3 0.3l1.6 1.2-.6.8 4.6 5.2-1 1L3 3.8l-1 .8z" fill="#a8a8a8"/></svg>
<div class="t" style="left:242.00px;top:697.97px;font-size:8.300px;color:#a8a8a8;font-weight:normal;font-family:'Liberation Sans';">Build</div>
<svg style="left:275px;top:698px" width="8" height="8" viewBox="0 0 8 8"><path d="M0 1h1.3M0 3.5h1.3M0 6h1.3M2.5 1H8M2.5 3.5H8M2.5 6H8" stroke="#a8a8a8" stroke-width="1.1"/></svg>
<div class="t" style="left:285.00px;top:697.97px;font-size:8.300px;color:#a8a8a8;font-weight:normal;font-family:'Liberation Sans';">6: TODO</div>
<svg style="left:331px;top:697px" width="8" height="9" viewBox="0 0 8 9"><rect x="0.5" y="0.5" width="6.5" height="7" fill="none" stroke="#a8a8a8" stroke-width="1"/><rect x="3.5" y="3.5" width="4.5" height="5" fill="#a8a8a8"/></svg>
<div class="t" style="left:342.00px;top:697.97px;font-size:8.300px;color:#a8a8a8;font-weight:normal;font-family:'Liberation Sans';">Java Enterprise</div>
<svg style="left:413px;top:698px" width="8" height="7" viewBox="0 0 8 7"><path d="M0.5 6.5C1 2 4 0.5 7.8 0.3 7.5 4 5 6.5 0.5 6.5z" fill="#a8a8a8"/><path d="M1 6.3L5 3" stroke="#39393b" stroke-width="0.6"/></svg>
<div class="t" style="left:423.00px;top:697.97px;font-size:8.300px;color:#a8a8a8;font-weight:normal;font-family:'Liberation Sans';">Spring</div>
<svg style="left:462px;top:698px" width="7" height="7" viewBox="0 0 7 7"><path d="M0 1h7M0 3.5h5M0 6h6" stroke="#a8a8a8" stroke-width="1.1"/></svg>
<div class="t" style="left:473.00px;top:697.97px;font-size:8.300px;color:#a8a8a8;font-weight:normal;font-family:'Liberation Sans';">0: Messages</div>
<svg style="left:1215px;top:697.5px" width="9" height="9" viewBox="0 0 9 9"><circle cx="4.5" cy="4.5" r="4.2" fill="#4caf50"/><text x="4.5" y="6.3" font-size="4.5" text-anchor="middle" fill="#fff" font-family="Liberation Sans" font-weight="bold">9+</text></svg>
<div class="t" style="left:1228.00px;top:697.97px;font-size:8.300px;color:#a8a8a8;font-weight:normal;font-family:'Liberation Sans';">Event Log</div>
<div class="abs" style="left:0px;top:709px;width:1280px;height:11px;background:#38393b;"></div>
<svg style="left:2px;top:711px" width="8" height="8" viewBox="0 0 8 8"><rect x="0.5" y="0.5" width="5.5" height="6" fill="none" stroke="#9a9a9a" stroke-width="1"/><rect x="2.5" y="2.5" width="5.5" height="5.5" fill="#9a9a9a"/></svg>
<div class="t" style="left:18.50px;top:711.53px;font-size:8.000px;color:#a0a0a0;font-weight:normal;font-family:'Liberation Sans';">Tests failed: 1, passed: 0 (2 minutes ago)</div>
<div class="t" style="left:1041.00px;top:711.53px;font-size:8.000px;color:#c0c0c0;font-weight:normal;font-family:'Liberation Sans';">95:23</div>
<div class="t" style="left:1071.00px;top:711.53px;font-size:8.000px;color:#737373;font-weight:normal;font-family:'Liberation Sans';">LF</div>
<div class="t" style="left:1087.00px;top:711.53px;font-size:8.000px;color:#737373;font-weight:normal;font-family:'Liberation Sans';">UTF-8</div>
<div class="t" style="left:1119.00px;top:711.53px;font-size:8.000px;color:#737373;font-weight:normal;font-family:'Liberation Sans';">4 spaces</div>
<svg style="left:1161px;top:711.5px" width="6" height="8" viewBox="0 0 6 8"><path d="M1 0v8M1 6h3V3" fill="none" stroke="#bdbdbd" stroke-width="1.2"/></svg>
<div class="t" style="left:1171.00px;top:711.53px;font-size:8.000px;color:#bdbdbd;font-weight:normal;font-family:'Liberation Sans';">index-permit-all</div>
<svg style="left:1237px;top:711px" width="9" height="9" viewBox="0 0 9 9"><circle cx="4" cy="4.5" r="3.6" fill="#e8a33a"/><path d="M4 2.5v2l1.5 1" stroke="#39393b" stroke-width="0.8" fill="none"/></svg>
<svg style="left:1253px;top:711px" width="7" height="9" viewBox="0 0 7 9"><rect x="0.5" y="0.5" width="6" height="8" rx="1" fill="#bdbdbd"/><rect x="1.8" y="2" width="3.4" height="2.3" fill="#39393b"/></svg>
<svg style="left:1266px;top:711px" width="8" height="8" viewBox="0 0 8 8"><circle cx="4" cy="4" r="3.5" fill="#6a6d70"/></svg>
<svg style="left:1226px;top:697.5px" width="18" height="14" viewBox="0 0 18 14"><path d="M2.5 4.5v3.2a3.6 3.6 0 0 0 7.2 0V4.5M9.7 4.5v3.2a3.6 3.6 0 0 0 4.5 3.4M2 2.6L4.5 0.6 7 2.6" fill="none" stroke="rgba(225,225,225,0.72)" stroke-width="2" stroke-linecap="round"/></svg>
<div class="t" style="left:1245.00px;top:700.37px;font-size:10.200px;color:rgba(230,230,230,0.7);font-weight:normal;font-family:'Liberation Sans';">Udemy</div>
<div class="abs" style="left:29px;top:705.3px;width:5px;height:0.8px;background:#8f8f8f;"></div>
<div class="abs" style="left:77px;top:705.3px;width:5px;height:0.8px;background:#8f8f8f;"></div>
<div class="abs" style="left:177px;top:705.3px;width:5px;height:0.8px;background:#8f8f8f;"></div>
<div class="abs" style="left:285px;top:705.3px;width:5px;height:0.8px;background:#8f8f8f;"></div>
<div class="abs" style="left:473px;top:705.3px;width:5px;height:0.8px;background:#8f8f8f;"></div>
<div class="abs" style="left:420px;top:285px;width:1px;height:80px;background:#323334;"></div>
<div class="abs" style="left:447px;top:301px;width:1px;height:48px;background:#323334;"></div>
<div class="abs" style="left:473px;top:317px;width:1px;height:32px;background:#323334;"></div>
<div class="abs" style="left:527px;top:333px;width:1px;height:16px;background:#323334;"></div>
</body></html>
